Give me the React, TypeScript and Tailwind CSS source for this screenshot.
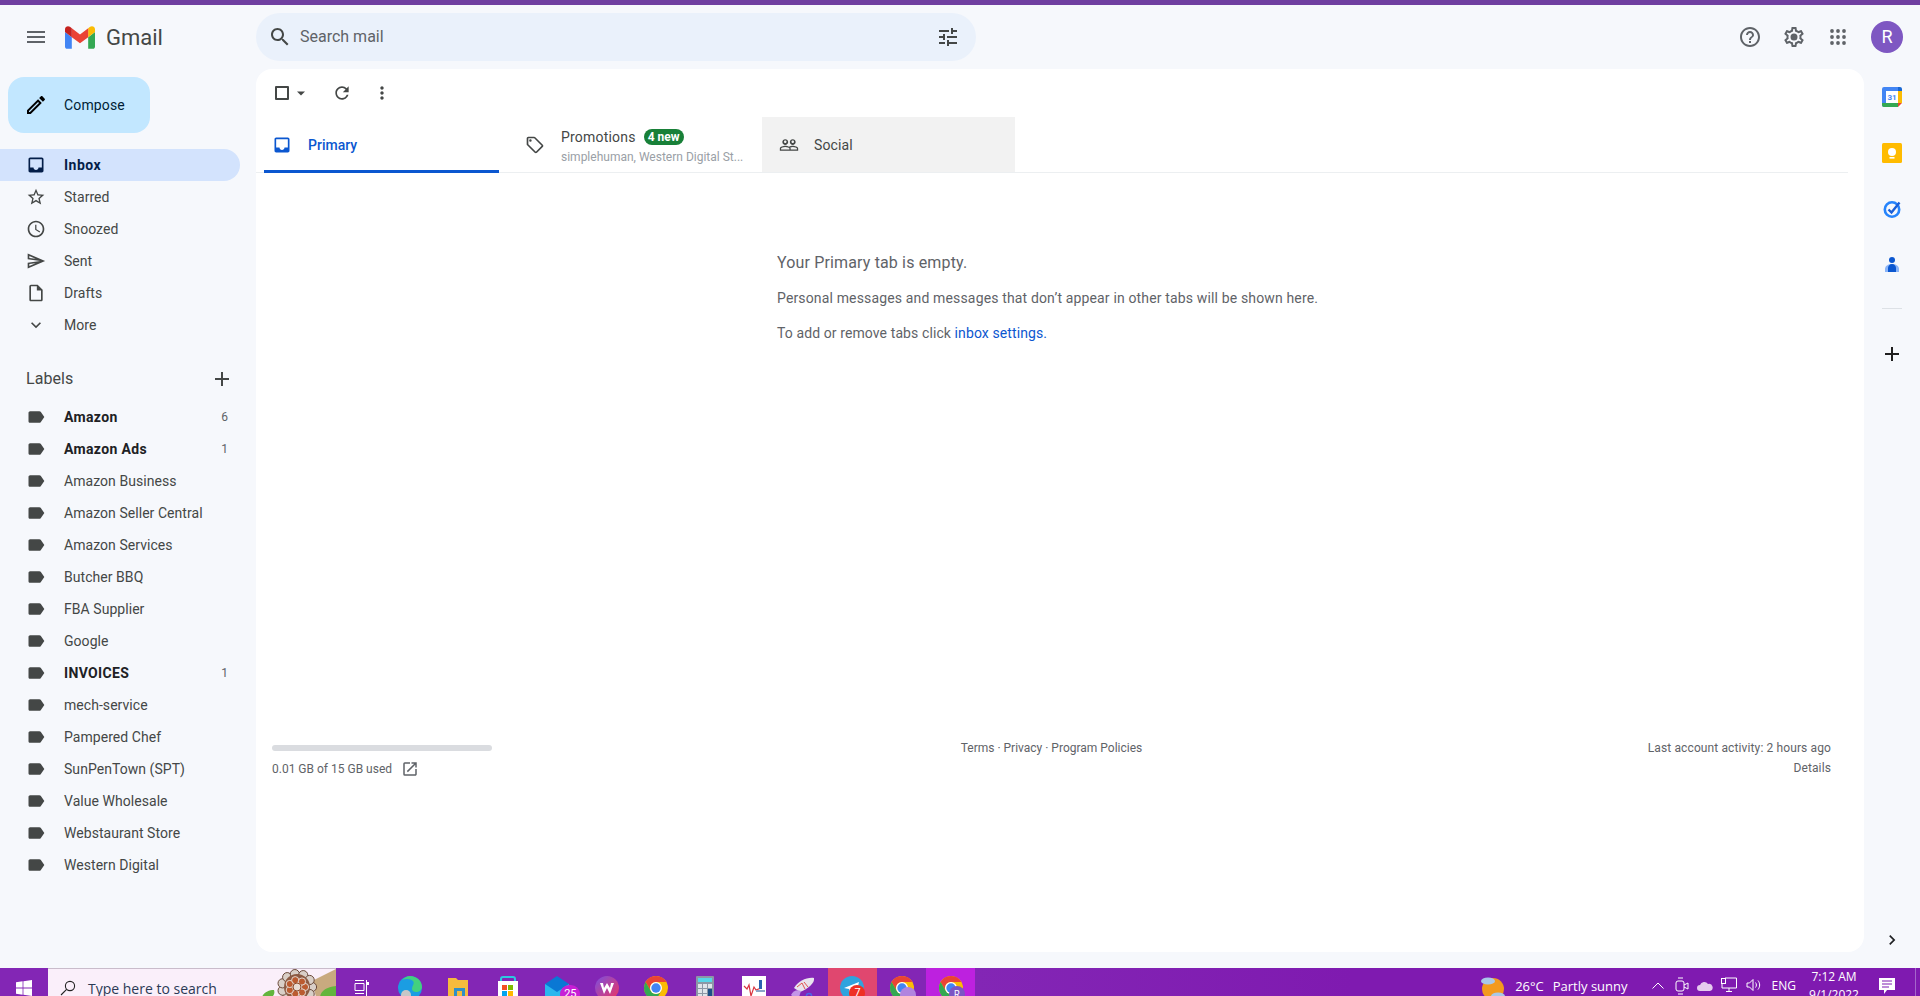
import type { ReactNode } from "react";

const P = {
  menu: "M3 18h18v-2H3v2zm0-5h18v-2H3v2zm0-7v2h18V6H3z",
  search: "M15.5 14h-.79l-.28-.27C15.41 12.59 16 11.11 16 9.5 16 5.91 13.09 3 9.5 3S3 5.91 3 9.5 5.91 16 9.5 16c1.61 0 3.09-.59 4.23-1.57l.27.28v.79l5 4.99L20.49 19l-4.99-5zm-6 0C7.01 14 5 11.99 5 9.5S7.01 5 9.5 5 14 7.01 14 9.5 11.99 14 9.5 14z",
  tune: "M3 17v2h6v-2H3zM3 5v2h10V5H3zm10 16v-2h8v-2h-8v-2h-2v6h2zM7 9v2H3v2h4v2h2V9H7zm14 4v-2H11v2h10zm-6-4h2V7h4V5h-4V3h-2v6z",
  help: "M11 18h2v-2h-2v2zm1-16C6.48 2 2 6.48 2 12s4.48 10 10 10 10-4.48 10-10S17.52 2 12 2zm0 18c-4.41 0-8-3.59-8-8s3.59-8 8-8 8 3.59 8 8-3.59 8-8 8zm0-14c-2.21 0-4 1.79-4 4h2c0-1.1.9-2 2-2s2 .9 2 2c0 2-3 1.75-3 5h2c0-2.25 3-2.5 3-5 0-2.21-1.79-4-4-4z",
  gear: "M19.43 12.98c.04-.32.07-.64.07-.98 0-.34-.03-.66-.07-.98l2.11-1.65c.19-.15.24-.42.12-.64l-2-3.46c-.09-.16-.26-.25-.44-.25-.06 0-.12.01-.17.03l-2.49 1c-.52-.4-1.08-.73-1.69-.98l-.38-2.65C14.46 2.18 14.25 2 14 2h-4c-.25 0-.46.18-.49.42l-.38 2.65c-.61.25-1.17.59-1.69.98l-2.49-1c-.06-.02-.12-.03-.18-.03-.17 0-.34.09-.43.25l-2 3.46c-.13.22-.07.49.12.64l2.11 1.65c-.04.32-.07.65-.07.98 0 .33.03.66.07.98l-2.11 1.65c-.19.15-.24.42-.12.64l2 3.46c.09.16.26.25.44.25.06 0 .12-.01.17-.03l2.49-1c.52.4 1.08.73 1.69.98l.38 2.65c.03.24.24.42.49.42h4c.25 0 .46-.18.49-.42l.38-2.65c.61-.25 1.17-.59 1.69-.98l2.49 1c.06.02.12.03.18.03.17 0 .34-.09.43-.25l2-3.46c.12-.22.07-.49-.12-.64l-2.11-1.65zm-1.98-1.71c.04.31.05.52.05.73 0 .21-.02.43-.05.73l-.14 1.13.89.7 1.08.84-.7 1.21-1.27-.51-1.04-.42-.9.68c-.43.32-.84.56-1.25.73l-1.06.43-.16 1.13-.2 1.35h-1.4l-.19-1.35-.16-1.13-1.06-.43c-.43-.18-.83-.41-1.23-.71l-.91-.7-1.06.43-1.27.51-.7-1.21 1.08-.84.89-.7-.14-1.13c-.03-.31-.05-.54-.05-.74s.02-.43.05-.73l.14-1.13-.89-.7-1.08-.84.7-1.21 1.27.51 1.04.42.9-.68c.43-.32.84-.56 1.25-.73l1.06-.43.16-1.13.2-1.35h1.39l.19 1.35.16 1.13 1.06.43c.43.18.83.41 1.23.71l.91.7 1.06-.43 1.27-.51.7 1.21-1.07.85-.89.7.14 1.13zM12 8.5a3.5 3.5 0 1 0 0 7 3.5 3.5 0 0 0 0-7z",
  inbox: "M19 3H4.99c-1.11 0-1.98.89-1.98 2L3 19c0 1.1.88 2 1.99 2H19c1.1 0 2-.9 2-2V5c0-1.11-.9-2-2-2zm0 12h-4c0 1.66-1.35 3-3 3s-3-1.34-3-3H4.99V5H19v10z",
  star: "M22 9.24l-7.19-.62L12 2 9.19 8.63 2 9.24l5.46 4.73L5.82 21 12 17.27 18.18 21l-1.63-7.03L22 9.24zM12 15.4l-3.76 2.27 1-4.28-3.32-2.88 4.38-.38L12 6.1l1.71 4.04 4.38.38-3.32 2.88 1 4.28L12 15.4z",
  clock: "M11.99 2C6.47 2 2 6.48 2 12s4.47 10 9.99 10C17.52 22 22 17.52 22 12S17.52 2 11.99 2zM12 20c-4.42 0-8-3.58-8-8s3.58-8 8-8 8 3.58 8 8-3.58 8-8 8zm.5-13H11v6l5.25 3.15.75-1.23-4.5-2.67z",
  send: "M4.01 6.03l7.51 3.22-7.52-1 .01-2.22m7.5 8.72L4 17.97v-2.22l7.51-1M2.01 3L2 10l15 2-15 2 .01 7L23 12 2.01 3z",
  draft: "M14 2H6c-1.1 0-2 .9-2 2v16c0 1.1.9 2 2 2h12c1.1 0 2-.9 2-2V8l-6-6zM6 20V4h7v5h5v11H6z",
  more: "M16.59 8.59L12 13.17 7.41 8.59 6 10l6 6 6-6z",
  label: "M17.63 5.84C17.27 5.33 16.67 5 16 5L5 5.01C3.9 5.01 3 5.9 3 7v10c0 1.1.9 1.99 2 1.99L16 19c.67 0 1.27-.33 1.63-.84L22 12l-4.37-6.16z",
  add: "M19 13h-6v6h-2v-6H5v-2h6V5h2v6h6v2z",
  refresh: "M17.65 6.35C16.2 4.9 14.21 4 12 4c-4.42 0-7.99 3.58-7.99 8s3.57 8 7.99 8c3.73 0 6.84-2.55 7.73-6h-2.08c-.82 2.33-3.04 4-5.65 4-3.31 0-6-2.69-6-6s2.69-6 6-6c1.66 0 3.14.69 4.22 1.78L13 11h7V4l-2.35 2.35z",
  vert: "M12 8c1.1 0 2-.9 2-2s-.9-2-2-2-2 .9-2 2 .9 2 2 2zm0 2c-1.1 0-2 .9-2 2s.9 2 2 2 2-.9 2-2-.9-2-2-2zm0 6c-1.1 0-2 .9-2 2s.9 2 2 2 2-.9 2-2-.9-2-2-2z",
  tag: "M21.41 11.58l-9-9C12.05 2.22 11.55 2 11 2H4c-1.1 0-2 .9-2 2v7c0 .55.22 1.05.59 1.42l9 9c.36.36.86.58 1.41.58s1.05-.22 1.41-.59l7-7c.37-.36.59-.86.59-1.41s-.23-1.06-.59-1.42zM13 20.01L4 11V4h7v-.01l9 9-7 7.02zM6.5 5a1.5 1.5 0 1 0 0 3 1.5 1.5 0 0 0 0-3z",
  people: "M16.5 13c-1.2 0-3.07.34-4.5 1-1.43-.67-3.3-1-4.5-1C5.33 13 1 14.08 1 16.25V19h22v-2.75c0-2.17-4.33-3.25-6.5-3.25zm-4 4.5h-10v-1.25c0-.54 2.56-1.75 5-1.75s5 1.21 5 1.75v1.25zm9 0H14v-1.25c0-.46-.2-.86-.52-1.22.88-.3 1.96-.53 3.02-.53 2.44 0 5 1.21 5 1.75v1.25zM7.5 12c1.93 0 3.5-1.57 3.5-3.5S9.43 5 7.5 5 4 6.57 4 8.5 5.57 12 7.5 12zm0-5.5c.83 0 1.5.67 1.5 1.5s-.67 1.5-1.5 1.5S6 8.83 6 8s.67-1.5 1.5-1.5zm9 5.5c1.93 0 3.5-1.57 3.5-3.5S18.43 5 16.5 5 13 6.57 13 8.5s1.57 3.5 3.5 3.5zm0-5.5c.83 0 1.5.67 1.5 1.5s-.67 1.5-1.5 1.5S15 8.83 15 8s.67-1.5 1.5-1.5z",
  open: "M19 19H5V5h7V3H5a2 2 0 0 0-2 2v14a2 2 0 0 0 2 2h14c1.1 0 2-.9 2-2v-7h-2v7zM14 3v2h3.59l-9.83 9.83 1.41 1.41L19 6.41V10h2V3h-7z",
  chevron: "M10 6L8.59 7.41 13.17 12l-4.58 4.59L10 18l6-6z",
  pencil: "M3 17.25V21h3.75L17.81 9.94l-3.75-3.75L3 17.25zM5.92 19H5v-.92l9.06-9.06.92.92L5.92 19zM20.71 5.63l-2.34-2.34c-.2-.2-.45-.29-.71-.29s-.51.1-.7.29l-1.83 1.83 3.75 3.75 1.83-1.83c.39-.39.39-1.02 0-1.41z",
};

function Icon({ d, className }: { d: string; className: string }) {
  return (
    <svg viewBox="0 0 24 24" fill="currentColor" className={className}>
      <path d={d} />
    </svg>
  );
}

const NAV = [
  { name: "Inbox", icon: P.inbox },
  { name: "Starred", icon: P.star },
  { name: "Snoozed", icon: P.clock },
  { name: "Sent", icon: P.send },
  { name: "Drafts", icon: P.draft },
  { name: "More", icon: P.more },
];

const LABELS = [
  { name: "Amazon", count: "6" },
  { name: "Amazon Ads", count: "1" },
  { name: "Amazon Business" },
  { name: "Amazon Seller Central" },
  { name: "Amazon Services" },
  { name: "Butcher BBQ" },
  { name: "FBA Supplier" },
  { name: "Google" },
  { name: "INVOICES", count: "1" },
  { name: "mech-service" },
  { name: "Pampered Chef" },
  { name: "SunPenTown (SPT)" },
  { name: "Value Wholesale" },
  { name: "Webstaurant Store" },
  { name: "Western Digital" },
];

function GmailLogo() {
  return (
    <svg viewBox="52 42 88 66" className="w-[30px] h-[23px]">
      <path fill="#4285f4" d="M58 108h14V74L52 59v43c0 3.32 2.69 6 6 6" />
      <path fill="#34a853" d="M120 108h14c3.32 0 6-2.69 6-6V59l-20 15" />
      <path fill="#fbbc04" d="M120 48v26l20-15v-8c0-7.42-8.47-11.65-14.4-7.2" />
      <path fill="#ea4335" d="M72 74V48l24 18 24-18v26L96 92" />
      <path fill="#c5221f" d="M52 51v8l20 15V48l-5.6-4.2c-5.94-4.45-14.4-.22-14.4 7.2" />
    </svg>
  );
}

function Sidebar() {
  return (
    <aside className="w-[256px] shrink-0 tracking-[0.05px]">
      <button className="ml-2 mt-2 flex h-14 w-[142px] items-center rounded-2xl bg-[#c2e7ff] pl-[16px] text-sm tracking-[0.15px] text-[#001d35]">
        <Icon d={P.pencil} className="h-6 w-6 text-black" />
        <span className="ml-[16px]">Compose</span>
      </button>
      <nav className="mt-4">
        {NAV.map((n) => (
          <div
            key={n.name}
            className={`flex h-8 w-[240px] items-center rounded-r-full pl-[26px] text-sm ${
              n.name === "Inbox" ? "bg-[#d3e3fd] font-bold tracking-[0.5px] text-[#041e49]" : "text-[#444746]"
            }`}
          >
            <Icon d={n.icon} className="h-5 w-5 shrink-0" />
            <span className="ml-[18px]">{n.name}</span>
          </div>
        ))}
      </nav>
      <div className="mt-7 flex h-5 w-[240px] items-center justify-between pl-[26px] pr-[6px] text-base text-[#444746]">
        <span>Labels</span>
        <Icon d={P.add} className="h-6 w-6" />
      </div>
      <div className="mt-3">
        {LABELS.map((l) => (
          <div key={l.name} className="flex h-8 w-[240px] items-center pl-[26px] pr-3 text-sm text-[#444746]">
            <Icon d={P.label} className="h-5 w-5 shrink-0 text-[#444746]" />
            <span className={`ml-[18px] flex-1 ${l.count ? "font-bold tracking-[0.35px] text-[#202124]" : ""}`}>{l.name}</span>
            {l.count && <span className="text-xs text-[#5f6368]">{l.count}</span>}
          </div>
        ))}
      </div>
    </aside>
  );
}

function Tabs() {
  return (
    <div className="flex h-14 border-b border-[#eceff1] pl-2 mr-4">
      <div className="flex h-14 w-[235px] items-center border-b-[3px] border-[#0b57d0] pl-2 pt-[2px] text-sm font-medium text-[#0b57d0]">
        <Icon d={P.inbox} className="h-5 w-5" />
        <span className="ml-4">Primary</span>
      </div>
      <div className="flex w-[263px] items-center pl-[26px] text-[#444746]">
        <Icon d={P.tag} className="h-5 w-5 shrink-0" />
        <div className="ml-4 pt-[3px]">
          <div className="-mt-px flex h-5 items-center text-sm tracking-[0.2px]">
            Promotions
            <span className="ml-2 flex h-4 items-center rounded-full bg-[#188038] px-[4px] text-xs font-bold tracking-normal text-white">4 new</span>
          </div>
          <div className="mt-[2px] text-xs text-[#9aa0a6]">simplehuman, Western Digital St...</div>
        </div>
      </div>
      <div className="flex w-[253px] items-center bg-[#f2f2f2] pl-[17px] text-sm text-[#444746]">
        <Icon d={P.people} className="h-5 w-5" />
        <span className="ml-[15px] tracking-[0.1px]">Social</span>
      </div>
    </div>
  );
}

function Mail() {
  return (
    <main className="h-[883px] w-[1608px] shrink-0 rounded-2xl bg-white">
      <div className="flex h-12 items-center pl-4 text-[#444746]">
        <div className="ml-[3px] h-[14px] w-[14px] rounded-[1px] border-2 border-[#444746]" />
        <svg viewBox="0 0 10 5" className="ml-[8px] h-[5px] w-[8px]" fill="currentColor">
          <path d="M0 0h10L5 5z" />
        </svg>
        <Icon d={P.refresh} className="ml-[27px] h-5 w-5" />
        <Icon d={P.vert} className="ml-[20px] h-5 w-5" />
      </div>
      <Tabs />
      <div className="h-[572px] pl-[521px] pt-[80px] text-sm tracking-[0.15px] text-[#5f6368]">
        <p className="text-base leading-5">Your Primary tab is empty.</p>
        <p className="mt-[15px] leading-5">Personal messages and messages that don’t appear in other tabs will be shown here.</p>
        <p className="mt-[15px] leading-5 tracking-[0.1px]">
          To add or remove tabs click <span className="text-[#0b57d0]">inbox settings.</span>
        </p>
      </div>
      <div className="grid grid-cols-3 pl-4 pr-[33px] text-xs text-[#5f6368]">
        <div>
          <div className="h-[6px] w-[220px] rounded-full bg-[#dadce0]" />
          <div className="mt-[9px] flex items-center">
            0.01 GB of 15 GB used
            <Icon d={P.open} className="ml-[9px] h-[18px] w-[18px]" />
          </div>
        </div>
        <div className="-mt-[7px] text-center leading-5">Terms · Privacy · Program Policies</div>
        <div className="-mt-[7px] text-right leading-5 tracking-[0.12px]">
          <div>Last account activity: 2 hours ago</div>
          <div>Details</div>
        </div>
      </div>
    </main>
  );
}

function SidePanel() {
  return (
    <div className="flex w-[56px] shrink-0 flex-col items-center pt-[18px]">
      <svg viewBox="0 0 20 20" className="h-5 w-5">
        <rect width="20" height="20" rx="1.5" fill="#fff" />
        <path fill="#4285f4" d="M0 2a2 2 0 0 1 2-2h14v4H4v16H2a2 2 0 0 1-2-2z" />
        <path fill="#1967d2" d="M16 0h2a2 2 0 0 1 2 2v2h-4z" />
        <path fill="#fbbc04" d="M16 4h4v12h-4z" />
        <path fill="#34a853" d="M4 16h12v4H2a2 2 0 0 1-2-2v-2z" />
        <path fill="#ea4335" d="M16 16h4l-4 4z" />
        <text x="10" y="13" textAnchor="middle" fontSize="8" fontWeight="700" fill="#4285f4" className="font-['Roboto',sans-serif]">31</text>
      </svg>
      <svg viewBox="0 0 20 20" className="mt-9 h-5 w-5">
        <rect width="20" height="20" rx="1.5" fill="#ffbb00" />
        <circle cx="10" cy="9" r="4" fill="#fff" />
        <rect x="7.5" y="14" width="5" height="1.6" fill="#fff" />
      </svg>
      <svg viewBox="0 0 20 20" className="mt-9 h-5 w-5" fill="none">
        <circle cx="10" cy="10.5" r="7.2" stroke="#2684fc" strokeWidth="2.6" />
        <path d="M6.5 10.5l3 3 8-10" stroke="#1a5fd8" strokeWidth="2.4" />
      </svg>
      <svg viewBox="0 0 20 20" className="mt-9 h-5 w-5">
        <circle cx="10" cy="5" r="3" fill="#0b57d0" />
        <path d="M3 17v-3c0-3 3-5 7-5s7 2 7 5v3z" fill="#8ab4f8" />
        <path d="M6 17v-4c0-2.2 1.8-4 4-4s4 1.8 4 4v4z" fill="#0b57d0" />
      </svg>
      <div className="mt-[33px] h-px w-5 bg-[#dde1e6]" />
      <Icon d={P.add} className="mt-[33px] h-6 w-6 text-[#1f1f1f]" />
      <Icon d={P.chevron} className="mt-[564px] h-5 w-5 text-[#202124]" />
    </div>
  );
}

function Flower() {
  const outer = Array.from({ length: 11 }, (_, i) => (i * Math.PI * 2) / 11);
  const inner = Array.from({ length: 7 }, (_, i) => (i * Math.PI * 2) / 7);
  return (
    <svg viewBox="0 0 76 28" className="ml-auto h-7 w-[76px] shrink-0">
      <path d="M52 12L76 0v28H56z" fill="#c8aa7f" />
      <path d="M2 28c2-5 7-7 12-7 1 3 0 5-2 7zM60 28c1-6 6-10 16-11v11z" fill="#63b53d" />
      {outer.map((a, i) => (
        <circle key={i} cx={37 + 15 * Math.cos(a)} cy={18 + 13 * Math.sin(a)} r="4.6" fill="#d9cfc7" stroke="#6b4a3a" strokeWidth="1" />
      ))}
      <circle cx="37" cy="18" r="13" fill="#8c5a42" />
      {inner.map((a, i) => (
        <circle key={i} cx={37 + 8 * Math.cos(a)} cy={18 + 7 * Math.sin(a)} r="3.6" fill="#bb5b30" stroke="#e4d8d0" strokeWidth="1" />
      ))}
      <circle cx="37" cy="18" r="4" fill="#e8dcd4" stroke="#8c4a2a" />
    </svg>
  );
}

function Cell({ children, bg }: { children: ReactNode; bg?: string }) {
  return <div className={`flex h-10 w-[49.2px] shrink-0 justify-center pt-2 ${bg ?? ""}`}>{children}</div>;
}

function Chrome({ badge }: { badge?: ReactNode }) {
  return (
    <div className="relative h-6 w-6">
      <svg viewBox="0 0 24 24" className="h-6 w-6">
        <circle cx="12" cy="12" r="12" fill="#fbbc04" />
        <path d="M12 0A12 12 0 0 1 22.39 6H12A6 6 0 0 0 6.800 15L1.610 6A12 12 0 0 1 12 0z" fill="#ea4335" />
        <path d="M1.610 6L6.800 15A6 6 0 0 0 17.200 15L12 24A12 12 0 0 1 1.610 6z" fill="#34a853" />
        <circle cx="12" cy="12" r="6" fill="#fff" />
        <circle cx="12" cy="12" r="4.700" fill="#4285f4" />
      </svg>
      {badge}
    </div>
  );
}

function Taskbar() {
  return (
    <footer className="flex h-[28px] shrink-0 overflow-hidden bg-[#8326b5] font-['Open_Sans',sans-serif] text-white">
      <div className="flex h-10 w-12 shrink-0 justify-center pt-3">
        <svg viewBox="0 0 16 16" className="h-4 w-4" fill="#fff">
          <path d="M0 2.2l6.6-.9v6.3H0zM7.4 1.2L16 0v7.6H7.4zM0 8.4h6.6v6.3L0 13.8zM7.4 8.4H16V16l-8.6-1.2z" />
        </svg>
      </div>
      <div className="flex h-10 w-[288px] shrink-0 border-t border-[#c9bccb] bg-[#faeffa] text-[#2b3a55]">
        <svg viewBox="0 0 16 16" className="ml-3 mt-[11px] h-4 w-4" fill="none" stroke="#222" strokeWidth="1.1">
          <circle cx="10" cy="6" r="4.6" />
          <path d="M6.6 9.4L1 15" />
        </svg>
        <span className="ml-3 mt-[10px] whitespace-nowrap text-sm leading-5">Type here to search</span>
        <Flower />
      </div>
      <Cell>
        <svg viewBox="0 0 16 24" className="h-6 w-4" fill="none" stroke="#fff" strokeWidth="1">
          <path d="M2 4.5h9M2 7.5h9v7H2zM2 17.5h9M13.5 4v16" />
          <rect x="13" y="6" width="3" height="3" fill="#fff" stroke="none" />
        </svg>
      </Cell>
      <Cell>
        <svg viewBox="0 0 24 24" className="h-6 w-6">
          <circle cx="12" cy="12" r="12" fill="#1b9de2" />
          <path d="M12 0c7 0 12 5 12 11 0 3-3 5-6 5-2 0-4-1-4-3 0-4 3-5 1-8C13 3 8 2 4 4c2-2 5-4 8-4z" fill="#43d17f" />
          <circle cx="8" cy="19" r="5" fill="#c7c7c7" />
        </svg>
      </Cell>
      <Cell>
        <svg viewBox="0 0 22 24" className="h-6 w-[22px]">
          <path d="M0 2h8l2 2h10v20H0z" fill="#f5bb3d" />
          <rect x="6" y="12" width="11" height="12" fill="#2f8fc7" />
          <rect x="9" y="15" width="5" height="6" fill="#f5bb3d" />
        </svg>
      </Cell>
      <Cell>
        <svg viewBox="0 0 20 24" className="h-6 w-5">
          <path d="M3 6V3a2 2 0 0 1 2-2h10a2 2 0 0 1 2 2v3" fill="none" stroke="#2bc8e0" strokeWidth="2" />
          <rect y="5" width="20" height="19" fill="#fff" />
          <rect x="4" y="9" width="5" height="5" fill="#f25022" />
          <rect x="10" y="9" width="5" height="5" fill="#7fba00" />
          <rect x="4" y="15" width="5" height="5" fill="#00a4ef" />
          <rect x="10" y="15" width="5" height="5" fill="#ffb900" />
        </svg>
      </Cell>
      <Cell>
        <div className="relative h-6 w-6">
          <svg viewBox="0 0 24 24" className="h-6 w-6">
            <path d="M12 0l12 8v16H0V8z" fill="#0a78d4" />
            <path d="M0 8l12 8 12-8v16H0z" fill="#2ab7ee" />
          </svg>
          <span className="absolute left-[15px] top-[9px] flex h-[18px] w-[20px] items-center justify-center rounded-full bg-[#c71fd6] font-['Roboto',sans-serif] text-[11px] text-white">25</span>
        </div>
      </Cell>
      <Cell>
        <svg viewBox="0 0 24 24" className="h-6 w-6">
          <defs>
            <linearGradient id="wps" x1="0" y1="0" x2="1" y2="1">
              <stop offset="0" stopColor="#7a4fe0" />
              <stop offset="1" stopColor="#f0355e" />
            </linearGradient>
          </defs>
          <circle cx="12" cy="12" r="12" fill="url(#wps)" />
          <path d="M5 7l4 11 3-6 3 6 4-11h-3l-1 5-3-5-3 5-1-5z" fill="#fff" />
        </svg>
      </Cell>
      <Cell>
        <Chrome />
      </Cell>
      <Cell>
        <svg viewBox="0 0 18 24" className="h-6 w-[18px]">
          <rect width="18" height="24" rx="1" fill="#8b98a6" />
          <rect x="2" y="2" width="14" height="4" fill="#56d6e8" />
          <rect x="2" y="8" width="4" height="4" fill="#dfe5ea" />
          <rect x="7" y="8" width="4" height="4" fill="#dfe5ea" />
          <rect x="12" y="8" width="4" height="4" fill="#dfe5ea" />
          <rect x="2" y="13" width="4" height="4" fill="#dfe5ea" />
          <rect x="7" y="13" width="4" height="4" fill="#dfe5ea" />
          <rect x="12" y="13" width="4" height="11" fill="#1c4f86" />
          <rect x="2" y="18" width="4" height="4" fill="#dfe5ea" />
          <rect x="7" y="18" width="4" height="4" fill="#dfe5ea" />
        </svg>
      </Cell>
      <Cell>
        <svg viewBox="0 0 24 24" className="h-6 w-6">
          <rect width="24" height="24" fill="#fff" />
          <path d="M2 10l3 3 2-4 2 11 3-9 2 3 5-2" fill="none" stroke="#d9333f" strokeWidth="1.2" />
          <path d="M17 4h3v9h-3z" fill="#2a63b0" />
          <path d="M14 14h9v2h-9z" fill="#8aa4c8" />
        </svg>
      </Cell>
      <Cell>
        <svg viewBox="0 0 24 24" className="h-6 w-6">
          <path d="M3 12C7 5 16 1 23 2c1 5-6 11-14 14z" fill="#e9e4ee" />
          <path d="M6 11l5-4 3 6M13 6l4 5" stroke="#e2524f" strokeWidth="1" fill="none" />
          <path d="M0 19c2-4 6-6 10-4l-2 6c-3 1-6 0-8-2z" fill="#c496e8" />
          <circle cx="18" cy="20" r="2.6" fill="none" stroke="#4d64e6" strokeWidth="1.5" />
        </svg>
      </Cell>
      <Cell bg="bg-[#e0476f]">
        <div className="relative h-6 w-6">
          <svg viewBox="0 0 24 24" className="h-6 w-6">
            <circle cx="12" cy="12" r="12" fill="#2fa3de" />
            <path d="M4 12l15-6-3 13-4-3-2 2-1-5z" fill="#fff" />
          </svg>
          <span className="absolute left-[9px] top-[9px] flex h-4 w-4 items-center justify-center rounded-full bg-[#ee3124] font-['Roboto',sans-serif] text-[11px] text-white">7</span>
        </div>
      </Cell>
      <Cell>
        <Chrome badge={<span className="absolute left-[10px] top-[11px] h-4 w-4 rounded-full bg-[#b184df]" />} />
      </Cell>
      <Cell bg="bg-[#bd21df]">
        <Chrome
          badge={
            <span className="absolute left-[10px] top-[10px] flex h-4 w-4 items-center justify-center rounded-full bg-[#7c55c4] text-[10px] leading-none text-white">R</span>
          }
        />
      </Cell>
      <div className="flex h-10 flex-1 bg-[linear-gradient(90deg,#8326b5,#7f1ab0_40%)]">
        <div className="ml-auto flex h-10 text-[13px]">
          <svg viewBox="0 0 24 24" className="mt-2 h-6 w-6">
            <circle cx="12" cy="13" r="11" fill="#f39a1e" />
            <ellipse cx="7" cy="5" rx="7" ry="3.6" fill="#a9c8e8" />
            <ellipse cx="17" cy="20" rx="7" ry="3.6" fill="#a9c8e8" />
          </svg>
          <span className="ml-[10px] mt-[8px] leading-5">26°C</span>
          <span className="ml-[9px] mt-[8px] leading-5">Partly sunny</span>
          <svg viewBox="0 0 12 7" className="ml-[24px] mt-[14px] h-[7px] w-3" fill="none" stroke="#fff">
            <path d="M.5 6.5L6 1l5.5 5.5" />
          </svg>
          <svg viewBox="0 0 14 18" className="ml-[11px] mt-[9px] h-[18px] w-[14px]" fill="none" stroke="#fff">
            <rect x="1" y="4" width="8" height="10" rx="2" />
            <path d="M9 8l4-2v6l-4-2M3 1h5M3 17h5" />
          </svg>
          <svg viewBox="0 0 16 10" className="ml-[8px] mt-[13px] h-[10px] w-4">
            <path d="M3 10a3 3 0 0 1 0-6 4.5 4.5 0 0 1 8-1 3.6 3.6 0 0 1 2 7z" fill="#e6cbee" />
          </svg>
          <svg viewBox="0 0 16 15" className="ml-[8px] mt-[9px] h-[15px] w-4" fill="none" stroke="#fff">
            <path d="M4 1h11.5v10H1V7M8 11v3M5 14.500h6" />
            <rect x=".5" y="1.500" width="4" height="5" fill="#7f1ab0" />
          </svg>
          <svg viewBox="0 0 16 14" className="ml-[9px] mt-[10px] h-[14px] w-4" fill="none" stroke="#fff">
            <path d="M1 5h2.500L7 1.500v11L3.500 9H1zM9.500 4.500c1.200 1.500 1.200 3.500 0 5M12 2.500c2.200 2.800 2.200 6.200 0 9" />
          </svg>
          <span className="ml-[10px] mt-[8px] text-xs leading-5">ENG</span>
          <div className="ml-[4px] w-[68px] text-center text-xs leading-[18px]">
            <div>7:12 AM</div>
            <div>9/1/2022</div>
          </div>
          <svg viewBox="0 0 16 16" className="ml-[11px] mr-[20px] mt-[10px] h-4 w-4" fill="#fff">
            <path d="M0 0h16v12H8l-3 4v-4H0z" />
            <path d="M3 3h10M3 6h10M3 9h7" stroke="#7f1ab0" />
          </svg>
          <div className="h-10 w-[5px] border-l border-[#a566cb]" />
        </div>
      </div>
    </footer>
  );
}

export default function App() {
  return (
    <div className="flex h-[996px] w-[1920px] flex-col overflow-hidden bg-[#f6f8fc] font-['Roboto',sans-serif]">
      <div className="h-[5px] shrink-0 bg-[#6f3fa0]" />
      <header className="flex h-16 shrink-0 items-center">
        <div className="flex w-[256px] shrink-0 items-center pl-[24px]">
          <Icon d={P.menu} className="h-6 w-6 text-[#5f6368]" />
          <div className="ml-[17px]">
            <GmailLogo />
          </div>
          <span className="ml-[11px] text-[22px] text-[#444746]">Gmail</span>
        </div>
        <div className="flex h-12 w-[720px] items-center rounded-full bg-[#eaf1fb] pl-[12px] pr-[16px]">
          <Icon d={P.search} className="h-6 w-6 text-[#444746]" />
          <span className="ml-[8px] flex-1 text-base text-[#5f6368]">Search mail</span>
          <Icon d={P.tune} className="h-6 w-6 text-[#444746]" />
        </div>
        <div className="ml-auto flex items-center pr-[17px] text-[#5f6368]">
          <Icon d={P.help} className="h-6 w-6" />
          <Icon d={P.gear} className="ml-5 h-6 w-6" />
          <svg viewBox="0 0 16 16" className="ml-[24px] h-4 w-4" fill="currentColor">
            {[2, 8, 14].flatMap((y) =>
              [2, 8, 14].map((x) => <circle key={`${x}-${y}`} cx={x} cy={y} r="1.9" />),
            )}
          </svg>
          <span className="ml-[25px] flex h-8 w-8 items-center justify-center rounded-full bg-[#7e57c2] text-lg text-white">R</span>
        </div>
      </header>
      <div className="flex min-h-0 flex-1">
        <Sidebar />
        <Mail />
        <SidePanel />
      </div>
      <Taskbar />
    </div>
  );
}
